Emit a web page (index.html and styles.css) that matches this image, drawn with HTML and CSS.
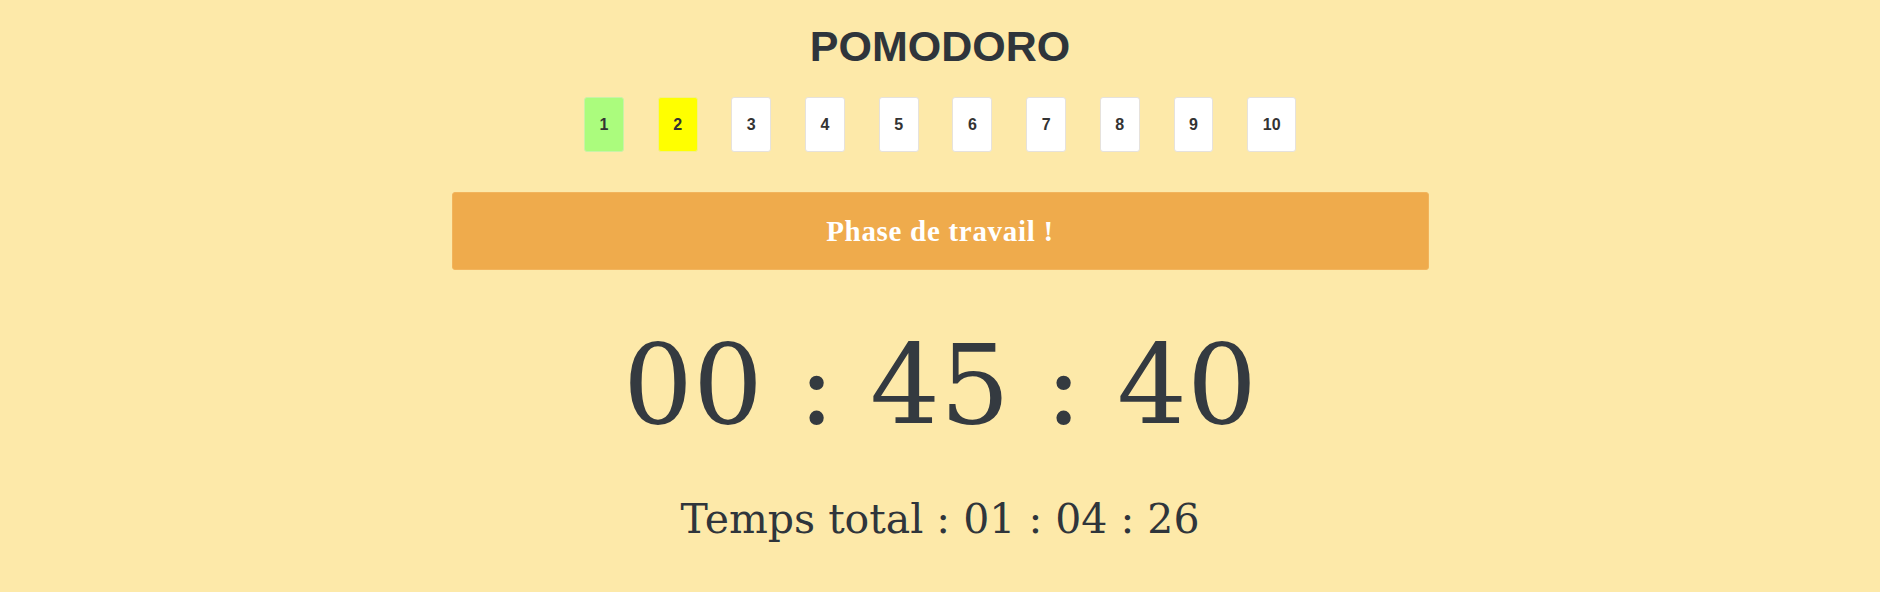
FILE: index.html
```html
<!DOCTYPE html>
<html lang="fr">
<head>
<meta charset="utf-8">
<title>Pomodoro</title>
<link rel="stylesheet" href="styles.css">
</head>
<body>
<main class="app">
  <h1 class="title">POMODORO</h1>
  <div class="cycles">
    <div class="cycle done">1</div>
    <div class="cycle current">2</div>
    <div class="cycle">3</div>
    <div class="cycle">4</div>
    <div class="cycle">5</div>
    <div class="cycle">6</div>
    <div class="cycle">7</div>
    <div class="cycle">8</div>
    <div class="cycle">9</div>
    <div class="cycle">10</div>
  </div>
  <div class="phase">Phase de travail !</div>
  <div class="timer">00 : 45 : 40</div>
  <div class="total">Temps total : 01 : 04 : 26</div>
</main>
</body>
</html>
```

FILE: styles.css
```css
html, body {
  margin: 0;
  padding: 0;
}

body {
  background: #fde9a9;
  color: #343a40;
  height: 592px;
  overflow: hidden;
}

.app {
  width: 977px;
  margin: 0 auto;
  display: flex;
  flex-direction: column;
  align-items: center;
}

.title {
  margin: 0;
  padding-top: 21px;
  font-family: "Liberation Sans", Arial, sans-serif;
  font-weight: bold;
  font-size: 43px;
  line-height: 50px;
  color: #2f353b;
}

.cycles {
  margin-top: 26px;
  display: flex;
  gap: 33.8px;
}

.cycle {
  height: 53px;
  padding: 0 14.5px;
  display: flex;
  align-items: center;
  justify-content: center;
  background: #ffffff;
  border: 1px solid #e6e2dc;
  border-radius: 3px;
  font-family: "Liberation Sans", Arial, sans-serif;
  font-weight: bold;
  font-size: 16px;
  color: #333333;
}

.cycle.done {
  background: #abfc7d;
  border-color: #c9f2a8;
}

.cycle.current {
  background: #ffff00;
  border-color: #f3ef8a;
}

.phase {
  align-self: stretch;
  box-sizing: border-box;
  margin-top: 40px;
  height: 78px;
  display: flex;
  align-items: center;
  justify-content: center;
  background: #efab4c;
  border: 1px solid #f2b45c;
  border-radius: 3px;
  font-family: "Liberation Serif", "Times New Roman", serif;
  font-weight: bold;
  font-size: 29px;
  letter-spacing: 0.7px;
  color: #ffffff;
}

.timer {
  margin-top: 60px;
  font-family: "DejaVu Serif", Georgia, serif;
  font-size: 110px;
  line-height: 1;
  color: #343a40;
  white-space: nowrap;
}

.total {
  margin-top: 59px;
  font-family: "DejaVu Serif", Georgia, serif;
  font-size: 41px;
  line-height: 1;
  color: #2f353b;
  white-space: nowrap;
}
```
